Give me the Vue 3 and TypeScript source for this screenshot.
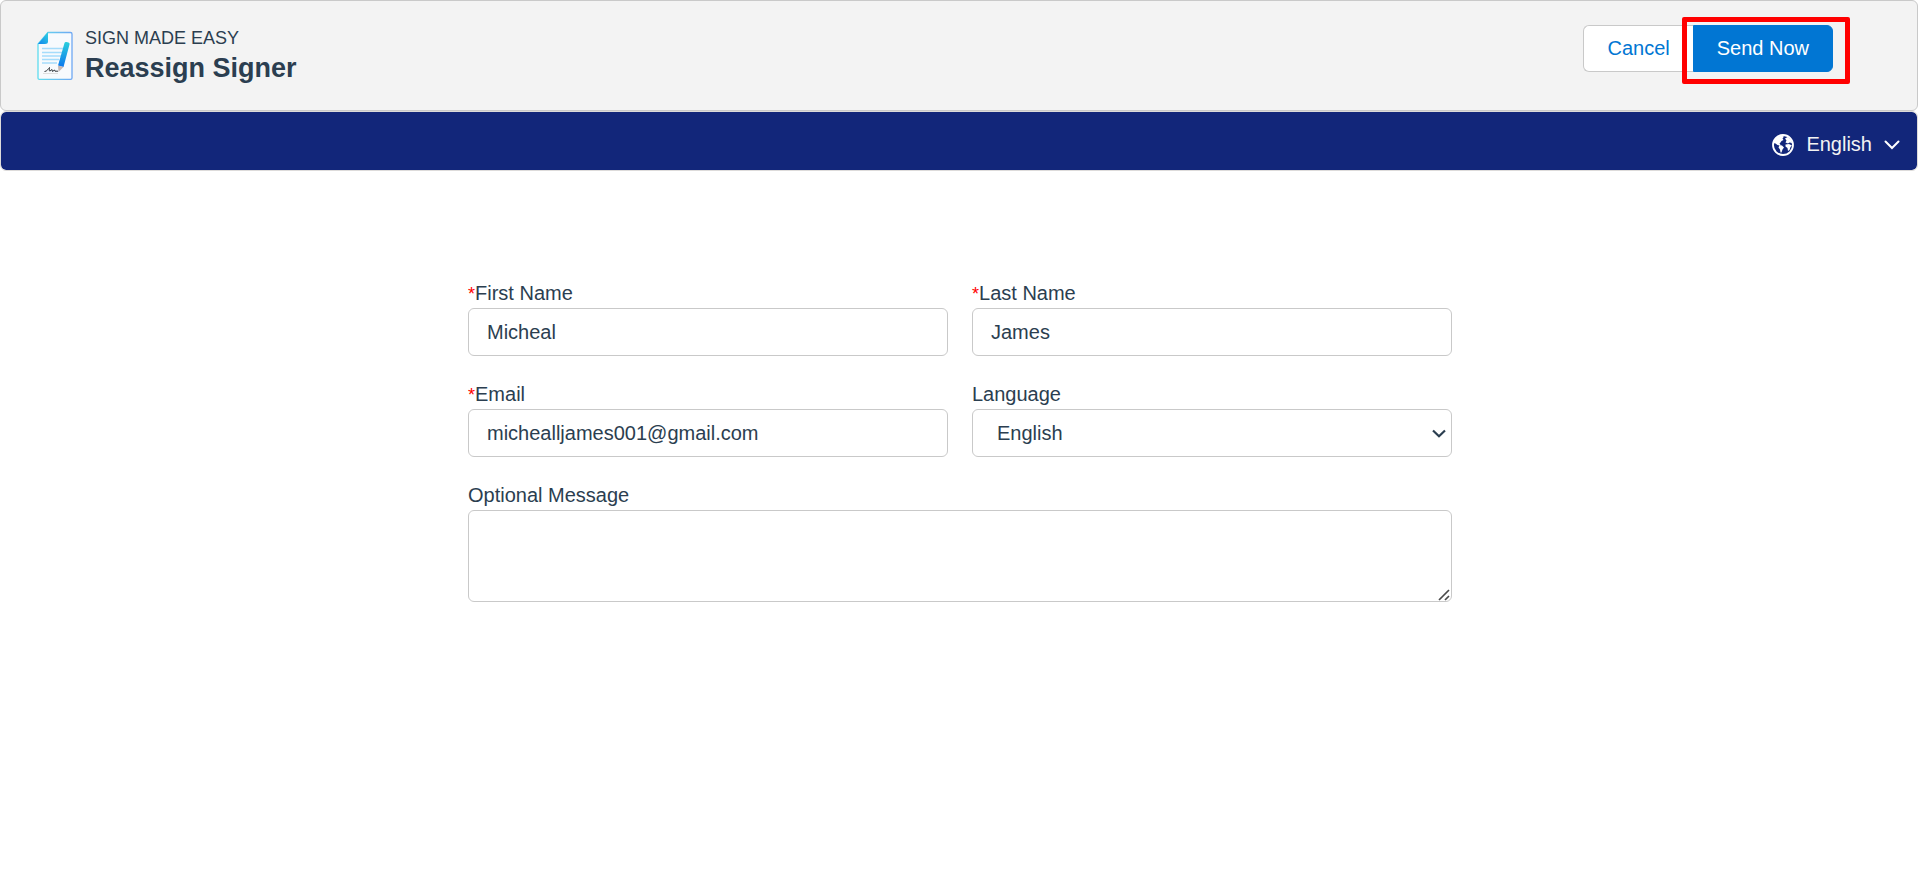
<script setup lang="ts">
import { reactive, ref } from 'vue'

interface SignerForm {
  firstName: string
  lastName: string
  email: string
  language: string
  message: string
}

const languages: string[] = ['English', 'French', 'German', 'Spanish']
const siteLanguage = ref('English')

const form = reactive<SignerForm>({
  firstName: 'Micheal',
  lastName: 'James',
  email: 'michealljames001@gmail.com',
  language: 'English',
  message: '',
})
</script>

<template>
  <div class="page">
    <header class="header">
      <div class="brand">
        <svg class="logo" viewBox="0 0 36 50" aria-hidden="true">
          <defs>
            <linearGradient id="edge" x1="0" y1="0" x2="1" y2="0">
              <stop offset="0" stop-color="#5fdcee" />
              <stop offset="1" stop-color="#6fa8f3" />
            </linearGradient>
            <linearGradient id="fold" x1="0" y1="1" x2="1" y2="0">
              <stop offset="0" stop-color="#0f83ee" />
              <stop offset="1" stop-color="#2fd3e0" />
            </linearGradient>
            <linearGradient id="pen" x1="0" y1="0" x2="0" y2="1">
              <stop offset="0" stop-color="#2bd0dc" />
              <stop offset="1" stop-color="#0c78ee" />
            </linearGradient>
          </defs>
          <path d="M11 2.500H33.500Q35 2.500 35 4V48Q35 49.300 33.500 49.300H2.500Q1 49.300 1 48V14Z" fill="#f7fafd" stroke="url(#edge)" stroke-width="1.300" />
          <path d="M11 2V11.500Q11 14 8 14H1Z" fill="url(#fold)" />
          <path d="M5 18.500H27M5 22.500H25M5 26H24M5 29.500H22M5 33H20" stroke="#a5dcfb" stroke-width="1.400" />
          <path d="M6 43.500H21" stroke="#dedede" stroke-width="1" />
          <path d="M7.500 41.500C10 41.500 11.500 38.500 12.500 37.500C12.500 39.500 12 41.500 13 41L15 39.500L15.500 41.500L17.500 40L18 41.200H21" fill="none" stroke="#33383d" stroke-width="1" />
          <path d="M27.500 13Q28 11.500 29.500 12L31.500 12.500Q33 13 32.500 14.500L26.500 37L21 35.500Z" fill="url(#pen)" />
          <path d="M21 35.500L26.500 37L23 40.500L21.500 42Z" fill="#c5b8b5" />
        </svg>
        <div>
          <p class="product">SIGN MADE EASY</p>
          <h1 class="title">Reassign Signer</h1>
        </div>
      </div>
      <div class="actions">
        <button type="button" class="btn btn-cancel">Cancel</button>
        <div class="highlighted">
          <button type="submit" form="signer-form" class="btn btn-send">Send Now</button>
          <span class="highlight" aria-hidden="true"></span>
        </div>
      </div>
    </header>

    <nav class="navbar">
      <button type="button" class="locale" aria-haspopup="listbox">
        <svg class="globe" viewBox="0 0 22 22" aria-hidden="true">
          <circle cx="11" cy="11" r="10" fill="none" stroke="#fff" stroke-width="1.800" />
          <path d="M2 6L5 3L9 1.500L12 2.500L10.500 4.500L11.500 6L9.500 7L8.500 8.500L7.500 9.500L8.500 10.500L7.500 11.500L5.500 11L3.500 9.500L2 9Z" fill="#fff" />
          <path d="M7.500 11L10 11.500L12 13.500L10.500 15.500L9.500 18.500L8.500 18.500L8 15.500L6.500 13.500Z" fill="#fff" />
          <path d="M13 4.500L15.500 3L18.500 5L20.500 9L17.500 8.500L16 9.500L13.500 8.500L14.500 6.500Z" fill="#fff" />
          <path d="M13.500 10.500L17 10L20 11.500L18.500 13L17.500 16L16 17L15.500 14L13.500 12.500Z" fill="#fff" />
        </svg>
        <span>{{ siteLanguage }}</span>
        <svg class="caret" viewBox="0 0 16 10" aria-hidden="true">
          <path d="M1.500 1.500L8 8L14.500 1.500" fill="none" stroke="#fff" stroke-width="2" stroke-linecap="round" />
        </svg>
      </button>
    </nav>

    <main class="main">
      <form id="signer-form" class="form" @submit.prevent>
        <div class="field">
          <label for="first-name"><span class="required">*</span>First Name</label>
          <input id="first-name" v-model="form.firstName" class="control" type="text" required />
        </div>
        <div class="field">
          <label for="last-name"><span class="required">*</span>Last Name</label>
          <input id="last-name" v-model="form.lastName" class="control" type="text" required />
        </div>
        <div class="field">
          <label for="email"><span class="required">*</span>Email</label>
          <input id="email" v-model="form.email" class="control" type="email" required />
        </div>
        <div class="field">
          <label for="language">Language</label>
          <div class="control-wrap">
            <select id="language" v-model="form.language" class="control select">
              <option v-for="name in languages" :key="name" :value="name">{{ name }}</option>
            </select>
            <svg class="select-arrow" viewBox="0 0 14 9" aria-hidden="true">
              <path d="M1 1.500L7 7.200L13 1.500" fill="none" stroke="#2b3e50" stroke-width="2.200" />
            </svg>
          </div>
        </div>
        <div class="field field-wide">
          <label for="message">Optional Message</label>
          <div class="control-wrap">
            <textarea id="message" v-model="form.message" class="control message"></textarea>
            <svg class="grip" viewBox="0 0 12 12" aria-hidden="true">
              <path d="M1 11L11 1M7 11L11 7" stroke="#4a4a4a" stroke-width="1.700" />
            </svg>
          </div>
        </div>
      </form>
    </main>
  </div>
</template>

<style>
body {
  margin: 0;
  background: #fff;
}
</style>

<style scoped>
.page,
.page * {
  box-sizing: border-box;
}

.page {
  font-family: "Liberation Sans", Arial, sans-serif;
  font-size: 20px;
  line-height: 29px;
  color: #2b3e50;
}

.header {
  display: flex;
  justify-content: space-between;
  align-items: flex-start;
  padding: 24px 84px 25px 36px;
  border: 1px solid #c9c9c9;
  border-radius: 6px;
  background: #f3f3f3;
}

.brand {
  display: flex;
  align-items: center;
  gap: 12px;
}

.logo {
  width: 36px;
  height: 50px;
}

.product {
  margin: 0;
  font-size: 18px;
  line-height: 26px;
}

.title {
  margin: 0;
  font-size: 27px;
  line-height: 34px;
  font-weight: 700;
}

.actions {
  display: flex;
}

.btn {
  height: 47px;
  padding: 0 23px 1px;
  border: 1px solid #c9c9c9;
  font: inherit;
  cursor: pointer;
}

.btn-cancel {
  border-right: 0;
  border-radius: 6px 0 0 6px;
  background: #fff;
  color: #0176d3;
}

.btn-send {
  border-color: #0176d3;
  border-radius: 0 6px 6px 0;
  background: #0176d3;
  color: #fff;
}

.highlighted {
  position: relative;
}

.highlight {
  position: absolute;
  inset: -8px -17px -12px -11px;
  border: 5px solid #f00;
  border-radius: 2px;
  pointer-events: none;
}

.navbar {
  display: flex;
  justify-content: flex-end;
  padding: 18px 17px 11px;
  border: 1px solid #dddbda;
  border-radius: 6px;
  background: #12267a;
  background-clip: padding-box;
}

.locale {
  display: flex;
  align-items: center;
  padding: 0;
  border: 0;
  background: none;
  font: inherit;
  color: #f3f3f3;
  cursor: pointer;
}

.globe {
  width: 22px;
  height: 22px;
  margin-right: 12px;
}

.caret {
  width: 16px;
  height: 10px;
  margin-left: 12px;
}

.main {
  padding: 108px 24px 24px 26px;
}

.form {
  display: grid;
  grid-template-columns: 1fr 1fr;
  gap: 24px;
  max-width: 984px;
  margin: 0 auto;
}

.field {
  display: flex;
  flex-direction: column;
  min-width: 0;
}

.field-wide {
  grid-column: 1 / -1;
}

.required {
  font-size: 18px;
  line-height: 18px;
  color: #f00;
}

.control {
  display: block;
  width: 100%;
  height: 48px;
  padding: 0 18px;
  border: 1px solid #c9c9c9;
  border-radius: 6px;
  background: #fff;
  font: inherit;
  color: inherit;
}

.control-wrap {
  position: relative;
}

.select {
  padding: 0 24px;
  appearance: none;
}

.select-arrow {
  position: absolute;
  top: 20px;
  right: 6px;
  width: 14px;
  height: 9px;
  pointer-events: none;
}

.message {
  height: 92px;
  padding: 12px 18px;
  resize: vertical;
}

.message::-webkit-resizer {
  background: transparent;
}

.grip {
  position: absolute;
  right: 2px;
  bottom: 1px;
  width: 12px;
  height: 12px;
  pointer-events: none;
}
</style>
